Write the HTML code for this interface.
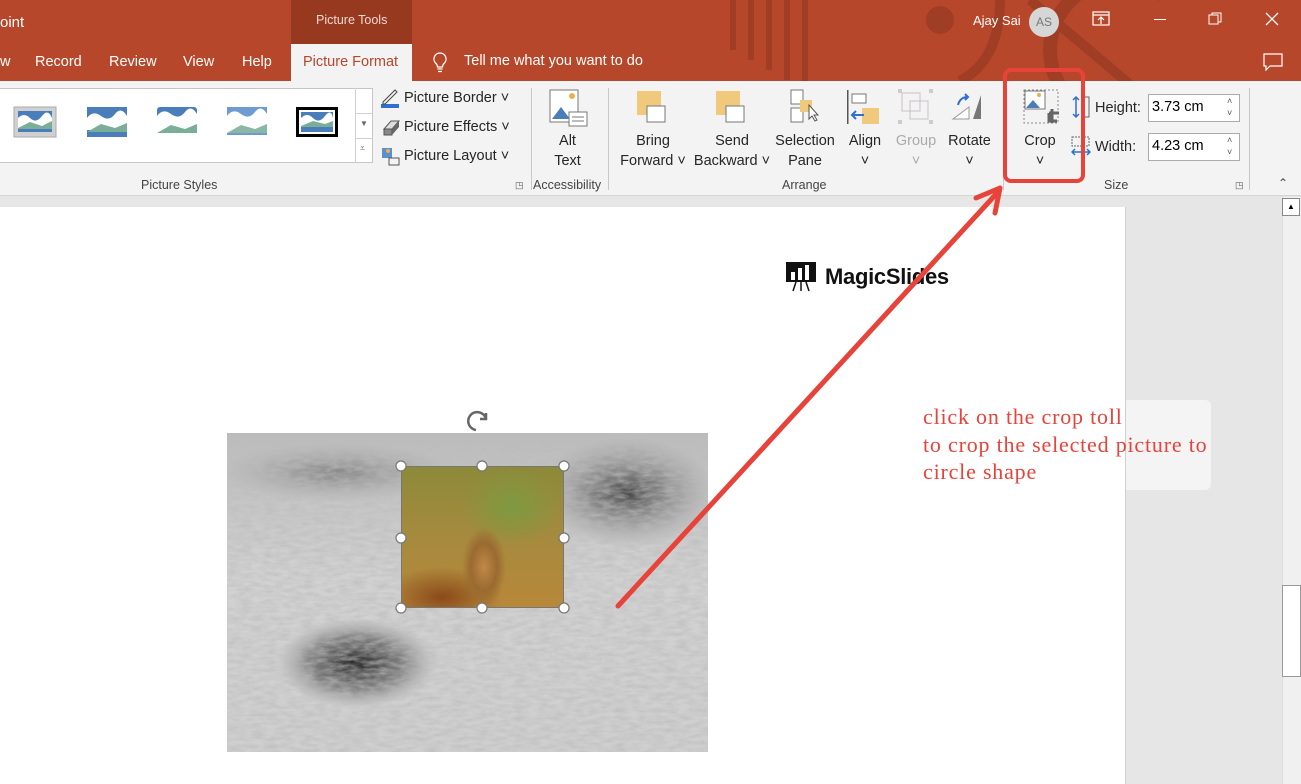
<!DOCTYPE html>
<html><head><meta charset="utf-8"><style>
*{margin:0;padding:0;box-sizing:border-box}
body{width:1301px;height:784px;overflow:hidden;position:relative;font-family:"Liberation Sans",sans-serif;background:#E6E6E6}
.a{position:absolute}
.t{position:absolute;font-size:14.5px;color:#fff;white-space:nowrap}
.r{position:absolute;font-size:14.5px;color:#262626;white-space:nowrap}
.c{text-align:center;line-height:20px}
.lbl{position:absolute;font-size:12.5px;color:#444;top:178px;white-space:nowrap}
.sep{position:absolute;top:88px;width:1px;height:102px;background:#C8C8C8}
.gi{position:absolute;top:106px;width:44px;height:32px}
</style></head><body>
<div class="a" style="left:0;top:0;width:1301px;height:81px;background:#B7472A;overflow:hidden">
 <svg class="a" style="left:700px;top:0" width="460" height="81">
  <g fill="#A03E25">
   <rect x="30" y="0" width="6" height="50"/><rect x="48" y="0" width="6" height="60"/><rect x="66" y="0" width="6" height="70"/><rect x="84" y="0" width="6" height="80"/><rect x="102" y="0" width="6" height="81"/>
   <circle cx="240" cy="20" r="14"/>
  </g>
  <circle cx="420" cy="50" r="70" fill="none" stroke="#A03E25" stroke-width="14"/>
  <path d="M330 0 L460 110" stroke="#A03E25" stroke-width="10"/>
  <path d="M300 0 Q300 60 260 81" stroke="#A03E25" stroke-width="10" fill="none"/>
 </svg>
</div>
<div class="a" style="left:291px;top:0;width:121px;height:44px;background:#97391F"></div>
<div class="t" style="left:316px;top:13px;font-size:12.5px;color:#f2d9d2">Picture Tools</div>
<div class="t" style="left:0;top:14px;font-size:15px">oint</div>
<div class="t" style="left:0;top:54px">w</div>
<div class="t" style="left:35px;top:54px">Record</div>
<div class="t" style="left:109px;top:54px">Review</div>
<div class="t" style="left:183px;top:54px">View</div>
<div class="t" style="left:242px;top:54px">Help</div>
<div class="a" style="left:291px;top:44px;width:121px;height:38px;background:#F3F3F3"></div>
<div class="t" style="left:303px;top:54px;color:#B7472A">Picture Format</div>
<svg class="a" style="left:431px;top:51px" width="18" height="22"><path d="M9 2a6 6 0 0 0-4 10.5c1 1 1.5 2 1.5 3.5h5c0-1.5.5-2.5 1.5-3.5A6 6 0 0 0 9 2z M6.5 18h5 M7 20.5h4" stroke="#fff" stroke-width="1.3" fill="none"/></svg>
<div class="t" style="left:464px;top:53px">Tell me what you want to do</div>
<div class="t" style="left:973px;top:13px;font-size:13px">Ajay Sai</div>
<div class="a" style="left:1029px;top:7px;width:30px;height:30px;border-radius:50%;background:#D6D6D6;color:#777;font-size:12px;text-align:center;line-height:30px">AS</div>
<svg class="a" style="left:1092px;top:11px" width="18" height="16"><rect x="1" y="1" width="16" height="13" stroke="#fff" fill="none" stroke-width="1.2"/><path d="M1 4h16 M9 13V7 M6 9l3-3 3 3" stroke="#fff" fill="none" stroke-width="1.2"/></svg>
<div class="a" style="left:1154px;top:19px;width:12px;height:1px;background:#fff"></div>
<svg class="a" style="left:1208px;top:12px" width="14" height="14"><rect x="1" y="3" width="9" height="9" stroke="#fff" fill="none"/><path d="M4 3V1h9v9h-3" stroke="#fff" fill="none"/></svg>
<svg class="a" style="left:1265px;top:12px" width="14" height="14"><path d="M1 1l12 12M13 1L1 13" stroke="#fff" stroke-width="1.3"/></svg>
<svg class="a" style="left:1263px;top:53px" width="20" height="18"><path d="M1 1h18v12H7l-4 4v-4H1z" stroke="#fff" fill="none" stroke-width="1.2"/></svg>

<div class="a" style="left:0;top:81px;width:1301px;height:115px;background:#F3F3F3;border-bottom:1px solid #D4D4D4"></div>
<div class="a" style="left:0;top:88px;width:373px;height:75px;background:#fff;border:1px solid #C6C6C6;border-left:none"></div>
<div class="a" style="left:355px;top:88px;width:18px;height:75px;border-left:1px solid #D0D0D0"></div>
<div class="a" style="left:355px;top:113px;width:18px;height:1px;background:#D0D0D0"></div>
<div class="a" style="left:355px;top:138px;width:18px;height:1px;background:#D0D0D0"></div>
<div class="a" style="left:360px;top:119px;font-size:8px;color:#666">▼</div>
<div class="a" style="left:360px;top:143px;font-size:9px;color:#666">⩡</div>
<svg class="gi" style="left:13px"><rect x="1" y="1" width="42" height="30" fill="#D0D0D0" stroke="#AAA"/><rect x="5" y="5" width="34" height="21" fill="#4A7EBB"/><path d="M5 12q6-6 12 0t12-2 10 2v10H5z" fill="#fff"/><path d="M5 22l12-6 12 4 10-5v8H5z" fill="#7BAE98"/></svg>
<svg class="gi" style="left:85px"><rect x="2" y="1" width="40" height="30" fill="#4A7EBB"/><path d="M2 12q6-8 14-2t14-2 12 2v14H2z" fill="#fff"/><path d="M2 26l14-8 14 4 12-5v9H2z" fill="#7BAE98"/></svg>
<svg class="gi" style="left:155px"><rect x="2" y="1" width="40" height="26" rx="3" fill="#4A7EBB"/><path d="M2 10q6-8 14-2t14-2 12 2v19H2z" fill="#fff"/><path d="M2 27l14-8 14 4 12-5v9H2z" fill="#7BAE98"/></svg>
<svg class="gi" style="left:225px"><rect x="2" y="1" width="40" height="28" fill="#6E9BD0"/><path d="M2 10q6-8 14-2t14-2 12 2v19H2z" fill="#fff"/><path d="M2 27l14-8 14 4 12-5v9H2z" fill="#8AB8A4"/></svg>
<svg class="gi" style="left:295px"><rect x="1" y="1" width="42" height="30" fill="#000"/><rect x="4" y="4" width="36" height="24" fill="#fff"/><rect x="6" y="6" width="32" height="20" fill="#4A7EBB"/><path d="M6 12q6-6 12 0t12-2 8 2v8H6z" fill="#fff"/><path d="M6 20l12-5 12 3 8-3v6H6z" fill="#7BAE98"/></svg>
<svg class="a" style="left:380px;top:89px" width="20" height="20"><rect x="1" y="15" width="18" height="4" fill="#2F6FD0"/><path d="M3 13L15 1l2 2L5 15H3z" fill="none" stroke="#444"/></svg>
<div class="r" style="left:404px;top:90px">Picture Border ˅</div>
<svg class="a" style="left:381px;top:119px" width="20" height="18"><path d="M3 10l7-8h8l-7 8z" fill="#ddd" stroke="#555"/><path d="M3 10h8v6H3z" fill="#888" stroke="#555"/><path d="M11 10l7-8v6l-7 8z" fill="#666"/></svg>
<div class="r" style="left:404px;top:119px">Picture Effects ˅</div>
<svg class="a" style="left:381px;top:147px" width="20" height="20"><rect x="1" y="1" width="10" height="10" fill="#5B8FCF"/><rect x="8" y="11" width="10" height="7" fill="none" stroke="#555"/><circle cx="7" cy="4" r="2" fill="#EBB24A"/></svg>
<div class="r" style="left:404px;top:148px">Picture Layout ˅</div>
<div class="lbl" style="left:141px">Picture Styles</div>
<div class="a" style="left:515px;top:180px;font-size:9px;color:#555">◳</div>
<div class="sep" style="left:531px"></div>
<svg class="a" style="left:549px;top:89px" width="40" height="40"><rect x="1" y="1" width="28" height="32" fill="#fff" stroke="#777"/><circle cx="23" cy="7" r="3" fill="#EBB24A"/><path d="M3 30l9-12 9 12z" fill="#4A7EBB"/><rect x="20" y="23" width="18" height="14" fill="#fff" stroke="#777"/><path d="M23 28h12M23 32h12" stroke="#777"/></svg>
<div class="r c" style="left:540px;top:131px;width:55px">Alt<br>Text</div>
<div class="lbl" style="left:533px">Accessibility</div>
<div class="sep" style="left:608px"></div>
<svg class="a" style="left:635px;top:90px" width="34" height="34"><rect x="2" y="1" width="24" height="24" fill="#F0C97C"/><rect x="12" y="16" width="18" height="16" fill="#fff" stroke="#777"/></svg>
<div class="r c" style="left:613px;top:131px;width:80px">Bring<br>Forward ˅</div>
<svg class="a" style="left:714px;top:90px" width="34" height="34"><rect x="2" y="1" width="24" height="24" fill="#F0C97C"/><rect x="12" y="16" width="18" height="16" fill="#fff" stroke="#777"/></svg>
<div class="r c" style="left:690px;top:131px;width:84px">Send<br>Backward ˅</div>
<svg class="a" style="left:789px;top:89px" width="34" height="36"><rect x="2" y="1" width="12" height="14" fill="#fff" stroke="#777"/><rect x="2" y="19" width="12" height="14" fill="#fff" stroke="#777"/><rect x="11" y="11" width="12" height="12" fill="#F0C97C"/><path d="M20 16v14l3-3 3 5 2-1-3-5h4z" fill="#fff" stroke="#555"/></svg>
<div class="r c" style="left:770px;top:131px;width:70px">Selection<br>Pane</div>
<svg class="a" style="left:846px;top:89px" width="40" height="36"><rect x="1" y="1" width="1.5" height="34" fill="#555"/><rect x="6" y="5" width="14" height="9" fill="#fff" stroke="#777"/><rect x="16" y="19" width="17" height="16" fill="#F0C97C"/><path d="M18 26H6M10 22l-4 4 4 4" stroke="#2F6FD0" stroke-width="2" fill="none"/></svg>
<div class="r c" style="left:840px;top:131px;width:50px">Align<br>˅</div>
<svg class="a" style="left:898px;top:89px" width="38" height="38"><g fill="none" stroke="#C8C0C8"><rect x="4" y="4" width="18" height="18"/><rect x="12" y="12" width="18" height="18"/></g><g fill="#CCC"><rect x="0" y="0" width="4" height="4"/><rect x="31" y="0" width="4" height="4"/><rect x="0" y="31" width="4" height="4"/><rect x="31" y="31" width="4" height="4"/></g></svg>
<div class="r c" style="left:890px;top:131px;width:52px;color:#AAA">Group<br>˅</div>
<svg class="a" style="left:951px;top:91px" width="40" height="34"><path d="M2 28L18 16v12z" fill="#fff" stroke="#999"/><path d="M22 28L30 4v24z" fill="#777"/><path d="M7 14q2-8 10-8M14 3l3 3-3 3" stroke="#2F6FD0" stroke-width="2" fill="none"/></svg>
<div class="r c" style="left:942px;top:131px;width:55px">Rotate<br>˅</div>
<div class="lbl" style="left:782px">Arrange</div>
<div class="sep" style="left:1003px"></div>
<svg class="a" style="left:1023px;top:89px" width="40" height="40"><rect x="1" y="1" width="34" height="33" fill="none" stroke="#888" stroke-dasharray="2 2"/><rect x="2" y="2" width="20" height="18" fill="#fff" stroke="#777"/><circle cx="16" cy="6" r="2" fill="#EBB24A"/><path d="M3 19l7-8 7 8z" fill="#4A7EBB"/><path d="M26 24h10M29 20v14M26 24v8h8" stroke="#666" stroke-width="3" fill="none"/></svg>
<div class="r c" style="left:1015px;top:131px;width:50px">Crop<br>˅</div>
<svg class="a" style="left:1071px;top:95px" width="20" height="24"><path d="M5 2v20M2 5l3-3 3 3M2 19l3 3 3-3" stroke="#2F6FD0" stroke-width="1.5" fill="none"/><rect x="11" y="2" width="7" height="20" fill="none" stroke="#666"/></svg>
<svg class="a" style="left:1071px;top:136px" width="20" height="22"><rect x="1" y="1" width="17" height="9" fill="none" stroke="#666" stroke-dasharray="2 1"/><path d="M1 16h18M4 13l-3 3 3 3M16 13l3 3-3 3" stroke="#2F6FD0" stroke-width="1.5" fill="none"/></svg>
<div class="r" style="left:1095px;top:100px">Height:</div>
<div class="r" style="left:1095px;top:139px">Width:</div>
<div class="a" style="left:1148px;top:94px;width:92px;height:28px;background:#fff;border:1px solid #ABABAB;font-size:14.5px;padding:4px 0 0 3px">3.73 cm<span class="a" style="left:78px;top:0;font-size:9px;line-height:12px;color:#555">˄<br>˅</span></div>
<div class="a" style="left:1148px;top:133px;width:92px;height:28px;background:#fff;border:1px solid #ABABAB;font-size:14.5px;padding:4px 0 0 3px">4.23 cm<span class="a" style="left:78px;top:0;font-size:9px;line-height:12px;color:#555">˄<br>˅</span></div>
<div class="lbl" style="left:1104px">Size</div>
<div class="a" style="left:1235px;top:180px;font-size:9px;color:#555">◳</div>
<div class="sep" style="left:1249px"></div>
<div class="a" style="left:1278px;top:176px;font-size:12px;color:#444">⌃</div>

<div class="a" style="left:0;top:207px;width:1126px;height:577px;background:#fff;border-right:1px solid #CFCFCF"></div>
<div class="a" style="left:1282px;top:197px;width:19px;height:587px;background:#F0F0F0;border-left:1px solid #DDD"></div>
<div class="a" style="left:1282px;top:198px;width:18px;height:18px;background:#fff;border:1px solid #888;font-size:8px;text-align:center;line-height:16px">▲</div>
<div class="a" style="left:1282px;top:585px;width:19px;height:92px;background:#fff;border:1px solid #999"></div>
<div class="a" style="left:1126px;top:400px;width:85px;height:90px;background:#F4F4F4;border-radius:0 6px 6px 0"></div>
<div class="a" style="left:923px;top:403px;font-family:'Liberation Serif',serif;font-size:22px;letter-spacing:0.8px;line-height:27.5px;color:#E8433A;white-space:nowrap">click on the crop toll<br>to crop the selected picture to<br>circle shape</div>

<svg class="a" style="left:786px;top:262px" width="30" height="30"><rect x="0" y="0" width="30" height="20" fill="#111"/><rect x="5" y="10" width="4" height="8" fill="#fff"/><rect x="12" y="6" width="4" height="12" fill="#fff"/><rect x="19" y="3" width="4" height="15" fill="#fff"/><path d="M10 20l-3 9M15 20v9M20 20l3 9" stroke="#111" stroke-width="1.5"/></svg>
<div class="a" style="left:825px;top:264px;font-size:22px;font-weight:bold;color:#111;letter-spacing:-0.3px">MagicSlides</div>

<svg class="a" style="left:227px;top:433px" width="481" height="319">
 <defs>
  <filter id="n" x="0" y="0" width="100%" height="100%">
   <feTurbulence type="fractalNoise" baseFrequency="0.08 0.25" numOctaves="3" seed="4"/>
   <feColorMatrix type="matrix" values="0 0 0 0 0.5  0 0 0 0 0.5  0 0 0 0 0.5  1.2 0 0 0 -0.35"/>
  </filter>
  <linearGradient id="bg" x1="0" y1="0" x2="0" y2="1"><stop offset="0" stop-color="#BBB"/><stop offset="0.45" stop-color="#D2D2D2"/><stop offset="1" stop-color="#CFCFCF"/></linearGradient>
  <radialGradient id="g1"><stop offset="0" stop-color="#222"/><stop offset="0.6" stop-color="#555" stop-opacity=".6"/><stop offset="1" stop-color="#888" stop-opacity="0"/></radialGradient>
  <radialGradient id="g2"><stop offset="0" stop-color="#444"/><stop offset="1" stop-color="#888" stop-opacity="0"/></radialGradient>
 </defs>
 <rect width="481" height="319" fill="url(#bg)"/>
 <ellipse cx="400" cy="60" rx="90" ry="55" fill="url(#g2)"/>
 <ellipse cx="110" cy="40" rx="120" ry="30" fill="url(#g2)" opacity=".5"/>
 <ellipse cx="130" cy="230" rx="80" ry="45" fill="url(#g1)"/>
 <rect width="481" height="319" filter="url(#n)"/>
</svg>
<div class="a" style="left:401px;top:466px;width:163px;height:142px;background:
 radial-gradient(ellipse 22px 40px at 82px 100px,#C08848 0,#9A6A30 60%,transparent 100%),
 radial-gradient(ellipse 60px 30px at 40px 130px,#8A4A1A 0,transparent 100%),
 radial-gradient(ellipse 50px 40px at 110px 40px,#7E9A40 0,transparent 100%),
 linear-gradient(#8C8A3A,#A68A3E 50%,#B8883A);border:1px solid #777"></div>
<svg class="a" style="left:392px;top:408px" width="182" height="210">
 <g fill="#fff" stroke="#777" stroke-width="1.2">
  <circle cx="9" cy="58" r="5"/><circle cx="90" cy="58" r="5"/><circle cx="172" cy="58" r="5"/>
  <circle cx="9" cy="130" r="5"/><circle cx="172" cy="130" r="5"/>
  <circle cx="9" cy="200" r="5"/><circle cx="90" cy="200" r="5"/><circle cx="172" cy="200" r="5"/>
 </g>
 <path d="M84 22a9 9 0 1 1 10 -11M94 5v6h-6" stroke="#666" stroke-width="2.5" fill="none"/>
</svg>

<svg class="a" style="left:0;top:0" width="1301" height="784">
 <rect x="1005" y="70" width="78" height="111" rx="6" fill="none" stroke="#E8433A" stroke-width="4"/>
 <path d="M618 606L998 192" stroke="#E8433A" stroke-width="5" stroke-linecap="round"/>
 <path d="M1000 188L976 198M1000 188L995 213" stroke="#E8433A" stroke-width="5" stroke-linecap="round"/>
</svg>
</body></html>
